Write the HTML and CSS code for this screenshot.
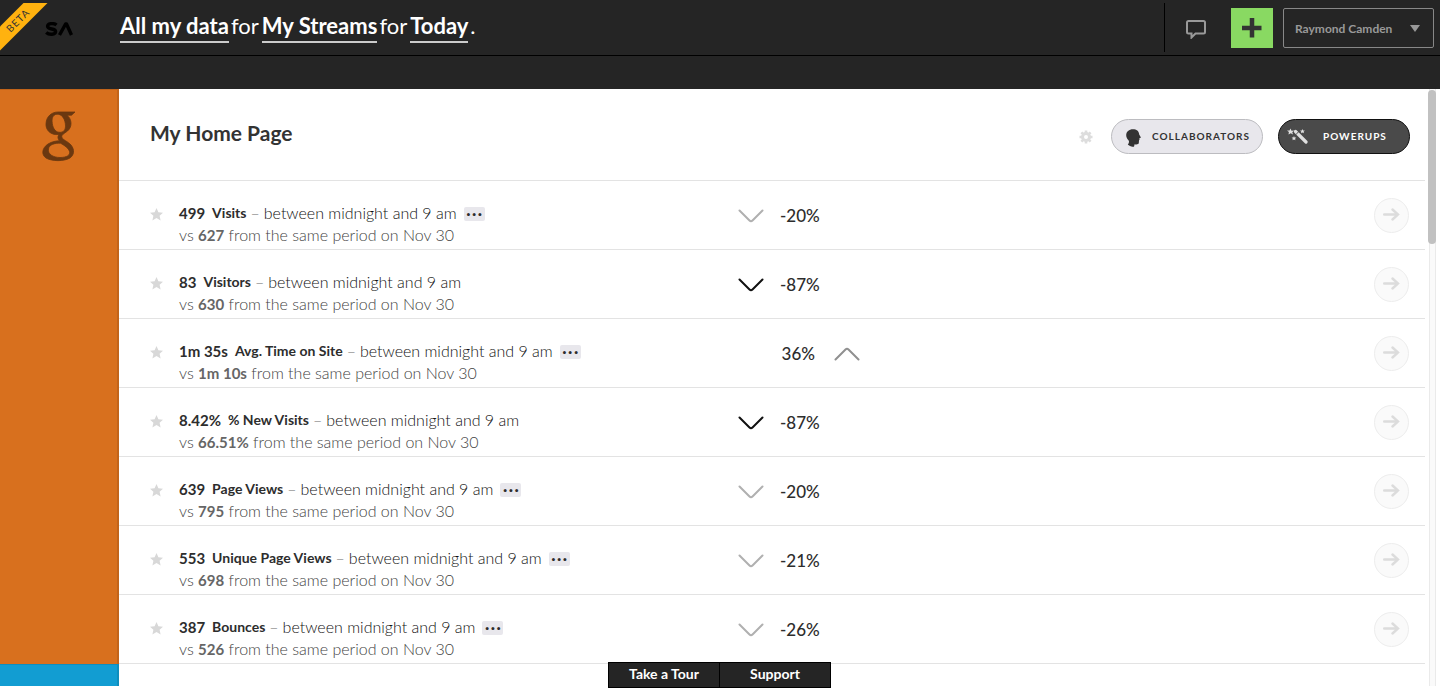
FILE: index.html
```html
<!DOCTYPE html>
<html lang="en">
<head>
<meta charset="utf-8">
<title>My Home Page</title>
<link rel="stylesheet" href="styles.css">
</head>
<body>
<svg class="defs" aria-hidden="true">
  <symbol id="star" viewBox="0 0 13 13"><path d="M6.500 0l1.900 4.200 4.600.5-3.400 3.100 1 4.700-4.100-2.400-4.100 2.400 1-4.700L0 4.700l4.600-.5z"/></symbol>
  <symbol id="down" viewBox="0 0 26 14"><path d="M1.500 1.500L11.500 11.500Q13 13 14.500 11.500L24.500 1.500"/></symbol>
  <symbol id="up" viewBox="0 0 26 14"><path d="M1.500 12.500L11.500 2.500Q13 1 14.500 2.500L24.500 12.500"/></symbol>
  <symbol id="go" viewBox="0 0 17 13"><path d="M1.200 6.500H15M9.500 1.500l5.500 5-5.500 5"/></symbol>
</svg>
<div class="app">
  <header class="topbar">
    <a class="brand" href="#" aria-label="SA home">
      <svg width="28" height="15" viewBox="0 0 28 15"><path d="M11.500 3C9 .9 2.600 1 2.600 4.300c0 4 8 1.500 8 5.300 0 3.300-6.600 3.400-9.400.9" fill="none" stroke="#000" stroke-width="3.400"/><path d="M14.500 13L20.600 2h.9l5 11" fill="none" stroke="#000" stroke-width="3.400" stroke-linejoin="round"/></svg>
    </a>
    <div class="corner"><span class="ribbon">BETA</span></div>
    <p class="sentence"><a href="#">All my data</a><span>for</span><a href="#">My Streams</a><span>for</span><a href="#">Today</a><span>.</span></p>
    <div class="tools">
      <button class="chat" aria-label="Messages"><svg width="20" height="19" viewBox="0 0 20 19"><path d="M2.500 1h15Q19 1 19 2.500v9.500Q19 13.500 17.500 13.500H9.500L5.500 17.500V13.500H2.500Q1 13.500 1 12V2.500Q1 1 2.500 1z" fill="none" stroke="#999" stroke-width="2"/></svg></button>
      <button class="add" aria-label="Add"><svg width="20" height="20" viewBox="0 0 20 20"><path d="M10 0v19.500M0 10h19.500" stroke="#333" stroke-width="4.500"/></svg></button>
      <button class="user">Raymond Camden<svg width="10" height="7" viewBox="0 0 10 7"><path d="M0 0h10L5 7z" fill="#999"/></svg></button>
    </div>
  </header>
  <div class="strip"></div>
  <div class="body">
    <nav class="streams" aria-label="Streams">
      <a class="stream google" href="#" aria-label="Google Analytics">
        <svg width="34" height="52" viewBox="0 0 34 52"><path fill="#6b3810" stroke="#6b3810" stroke-width=".8" fill-rule="evenodd" d="M16 1H33L29.500 4.200H25C30 8 30.500 16 25.500 20C21 23.500 19 24 20 26.500C21 29 26 30.500 29 34C33 39 32 44 28 47C22 50.500 10 50.500 4 47C-1 43.500 0 37 6 33C10 30.500 14 30 17.500 29.700C15.500 27.500 15.500 25.500 17 23.500C8 24.500 3.500 18.500 4 12.500C4.500 5 10 1 16 1zM15 3.200C10.500 3.500 9.500 8 10.300 12.500C11 18 14 21.700 18.500 21.300C23 21 24 17 23.300 12.500C22.500 7 19.500 3 15 3.200zM18.500 32.200C13 32 7 33.500 6.500 38C5.500 43 11 46.500 18 46.500C25 46.500 28.500 44 27.500 40.500C26.500 37 22.500 34.500 18.500 32.200z"/></svg>
      </a>
      <a class="stream next" href="#" aria-label="Next stream"></a>
    </nav>
    <main class="panel">
      <div class="heading">
        <h1>My Home Page</h1>
        <button class="gear" aria-label="Settings"><svg width="14" height="14" viewBox="0 0 14 14"><circle cx="7" cy="7" r="3.500" fill="none" stroke="#ddd" stroke-width="3"/><path d="M7 .5v2.500M7 11v2.500M.5 7H3M11 7h2.500M2.400 2.400l1.800 1.800M9.800 9.800l1.800 1.800M2.400 11.600l1.800-1.800M9.800 4.200l1.800-1.800" stroke="#ddd" stroke-width="2.600"/></svg></button>
        <button class="pill light"><svg width="15" height="18" viewBox="0 0 15 18"><path fill="#333" d="M7 .2C3 .2.200 2.600.2 6.200c0 2.300 1 3.500 2.300 5C3.500 12.500 3 14 1.800 15.500c1.500 1.400 4 2.300 6.200 2.300l.6-2.600c2 .4 4 .2 4.200-1.200l.2-2.500.6-1.200-.2-1.300c1 0 1.600-.2 1.400-.8L13.200 5.500C13 2 10.500.2 7 .2z"/></svg>COLLABORATORS</button>
        <button class="pill dark"><svg width="21" height="16" viewBox="0 0 21 16"><path d="M8.500 3.500L19 14" stroke="#e0e0e0" stroke-width="3.200" stroke-linecap="round"/><path d="M9.200 6.200l2.800-2.800" stroke="#4a4a4a"/><path fill="#e0e0e0" d="M3.500.5l1 2.200 2.500-.3-1.700 1.800L6 6.500 3.700 5.300 1.500 6.600l.4-2.500L0 2.600l2.500-.1zM15.500 1l.6 1.400 1.700.1-1.200 1.200.3 1.600-1.400-.8-1.500.8.300-1.600-1.200-1.200 1.700-.1zM7 8l.6 1.400 1.700.1-1.200 1.200.3 1.600L7 11.500l-1.500.8.3-1.600-1.200-1.200 1.700-.1z"/></svg>POWERUPS</button>
      </div>
      <ul class="rows">
        <li class="row"><button class="star" aria-label="Favourite"><svg width="13" height="13"><use href="#star"/></svg></button><div class="copy"><p class="now"><strong>499</strong><b>Visits</b><i>–</i><span>between midnight and 9 am</span><button class="more" aria-label="More">•••</button></p><p class="then">vs <strong>627</strong> from the same period on Nov 30</p></div><div class="delta soft"><svg><use href="#down"/></svg><span>-20%</span></div><a class="go" href="#" aria-label="Open Visits"><svg width="17" height="13"><use href="#go"/></svg></a></li>
        <li class="row"><button class="star" aria-label="Favourite"><svg width="13" height="13"><use href="#star"/></svg></button><div class="copy"><p class="now"><strong>83</strong><b>Visitors</b><i>–</i><span>between midnight and 9 am</span></p><p class="then">vs <strong>630</strong> from the same period on Nov 30</p></div><div class="delta hard"><svg><use href="#down"/></svg><span>-87%</span></div><a class="go" href="#" aria-label="Open Visitors"><svg width="17" height="13"><use href="#go"/></svg></a></li>
        <li class="row"><button class="star" aria-label="Favourite"><svg width="13" height="13"><use href="#star"/></svg></button><div class="copy"><p class="now"><strong>1m 35s</strong><b>Avg. Time on Site</b><i>–</i><span>between midnight and 9 am</span><button class="more" aria-label="More">•••</button></p><p class="then">vs <strong>1m 10s</strong> from the same period on Nov 30</p></div><div class="delta rise"><span>36%</span><svg><use href="#up"/></svg></div><a class="go" href="#" aria-label="Open Avg. Time on Site"><svg width="17" height="13"><use href="#go"/></svg></a></li>
        <li class="row"><button class="star" aria-label="Favourite"><svg width="13" height="13"><use href="#star"/></svg></button><div class="copy"><p class="now"><strong>8.42%</strong><b>% New Visits</b><i>–</i><span>between midnight and 9 am</span></p><p class="then">vs <strong>66.51%</strong> from the same period on Nov 30</p></div><div class="delta hard"><svg><use href="#down"/></svg><span>-87%</span></div><a class="go" href="#" aria-label="Open New Visits"><svg width="17" height="13"><use href="#go"/></svg></a></li>
        <li class="row"><button class="star" aria-label="Favourite"><svg width="13" height="13"><use href="#star"/></svg></button><div class="copy"><p class="now"><strong>639</strong><b>Page Views</b><i>–</i><span>between midnight and 9 am</span><button class="more" aria-label="More">•••</button></p><p class="then">vs <strong>795</strong> from the same period on Nov 30</p></div><div class="delta soft"><svg><use href="#down"/></svg><span>-20%</span></div><a class="go" href="#" aria-label="Open Page Views"><svg width="17" height="13"><use href="#go"/></svg></a></li>
        <li class="row"><button class="star" aria-label="Favourite"><svg width="13" height="13"><use href="#star"/></svg></button><div class="copy"><p class="now"><strong>553</strong><b>Unique Page Views</b><i>–</i><span>between midnight and 9 am</span><button class="more" aria-label="More">•••</button></p><p class="then">vs <strong>698</strong> from the same period on Nov 30</p></div><div class="delta soft"><svg><use href="#down"/></svg><span>-21%</span></div><a class="go" href="#" aria-label="Open Unique Page Views"><svg width="17" height="13"><use href="#go"/></svg></a></li>
        <li class="row"><button class="star" aria-label="Favourite"><svg width="13" height="13"><use href="#star"/></svg></button><div class="copy"><p class="now"><strong>387</strong><b>Bounces</b><i>–</i><span>between midnight and 9 am</span><button class="more" aria-label="More">•••</button></p><p class="then">vs <strong>526</strong> from the same period on Nov 30</p></div><div class="delta soft"><svg><use href="#down"/></svg><span>-26%</span></div><a class="go" href="#" aria-label="Open Bounces"><svg width="17" height="13"><use href="#go"/></svg></a></li>
      </ul>
    </main>
    <div class="track"><div class="thumb"></div></div>
  </div>
  <div class="help"><button>Take a Tour</button><button>Support</button></div>
</div>
</body>
</html>
```
FILE: styles.css
```css
* { box-sizing: border-box; }
body { margin: 0; background: #fff; color: #2d2d2d; font-family: Lato, "Open Sans", sans-serif; font-size: 16px; }
button { font: inherit; color: inherit; border: 0; padding: 0; background: none; cursor: pointer; }
a { color: inherit; text-decoration: none; }
h1, p, ul { margin: 0; padding: 0; }
strong, b { font-weight: 700; }
svg { display: block; flex: none; }
.defs { position: absolute; width: 0; height: 0; }
.app { position: relative; display: flex; flex-direction: column; height: 100vh; padding-bottom: 7px; overflow: hidden; }

.topbar { position: relative; display: flex; flex: none; align-items: center; height: 56px; background: #252525; border-bottom: 1px solid #000; color: #fff; }
.brand { width: 120px; padding: 4px 0 0 45px; }
.corner { position: absolute; top: 3px; left: 0; width: 48px; height: 48px; overflow: hidden; }
.ribbon { position: absolute; top: 9px; left: -17px; width: 70px; height: 17px; background: #ffb20f; color: #333; font-size: 10px; line-height: 17px; letter-spacing: 1px; text-align: center; transform: rotate(-45deg); }
.sentence { display: flex; align-items: center; font-size: 22px; line-height: 31px; white-space: nowrap; padding-bottom: 8px; margin-top: 4px; }
.sentence a { border-bottom: 2px solid #ccc; font-weight: 700; padding-top: 1px; }
.sentence span { margin: 0 3px 0 2px; font-weight: 400; }
.tools { display: flex; align-items: center; align-self: stretch; margin: 3px 6px 3px auto; padding-top: 1px; border-left: 1px solid #000; }
.chat { margin: 2px 25px 0 21px; }
.add { display: grid; place-items: center; width: 42px; height: 40px; margin-right: 10px; background: #89d962; }
.user { display: flex; align-items: center; justify-content: space-between; width: 151px; height: 40px; padding: 0 13px 0 11px; border: 1px solid #888; border-radius: 2px; color: #999; font-size: 12px; font-weight: 700; }
.strip { flex: none; height: 33px; background: #252525; }

.body { display: flex; flex: 1; min-height: 0; }
.streams { display: flex; flex: none; flex-direction: column; width: 119px; }
.stream { display: block; box-shadow: inset -2px 1px 0 rgb(0 0 0 / 10%); }
.google { flex: 1; padding: 22px 0 0 42px; background: #d8701e; }
.next { height: 22px; background: #129dd2; }
.panel { flex: 1; min-width: 0; overflow: hidden; }
.heading { display: flex; align-items: center; height: 92px; padding: 3px 15px 0 31px; border-bottom: 1px solid #e3e3e3; }
.heading h1 { flex: 1; padding-bottom: 6px; font-size: 21px; line-height: 26px; font-weight: 700; color: #333; }
.gear { margin: 2px 18px 0 0; }
.pill { display: flex; align-items: center; height: 35px; border: 1px solid; border-radius: 18px; font-size: 10px; font-weight: 700; letter-spacing: 1px; }
.light { width: 152px; gap: 11px; padding-left: 14px; margin-right: 15px; background: #e8e7ec; border-color: #bcbcc0; color: #333; }
.light svg { margin-top: 3px; }
.dark { width: 132px; gap: 15px; padding-left: 8px; background: #4a4a4a; border-color: #111; color: #fff; }

.rows { list-style: none; }
.row { display: grid; grid-template-columns: 29px 559fr 122px 514fr 35px; align-items: start; height: 69px; padding: 0 16px 0 31px; border-bottom: 1px solid #e3e3e3; }
.star { width: 13px; margin-top: 27px; fill: #d8d8d8; }
.copy { padding-top: 21px; line-height: 22px; font-weight: 300; white-space: nowrap; }
.copy strong { font-size: 15px; }
.now { display: flex; align-items: center; }
.now b { margin-left: 7px; font-size: 14px; }
.now i { margin: 0 4px; font-style: normal; color: #777; }
.now span { color: #111; }
.more { width: 21px; height: 14px; margin: 2px 0 0 7px; border-radius: 2px; background: #e8e7ec; font-size: 10px; line-height: 14px; }
.then { color: #444; }
.then strong { color: #666; }
.delta { display: flex; align-items: center; gap: 16px; margin-top: 24px; font-size: 17px; line-height: 22px; font-weight: 500; }
.delta svg { width: 26px; height: 14px; fill: none; stroke: currentColor; stroke-width: 2; stroke-linecap: round; }
.soft svg { color: #b0b0b0; }
.hard svg { color: #111; }
.rise { justify-content: flex-end; gap: 19px; }
.rise svg { color: #909090; }
.go { grid-column: 5; display: grid; place-items: center; width: 35px; height: 35px; margin-top: 17px; padding-bottom: 2px; border: 1px solid #ededed; border-radius: 50%; background: #fafafa; }
.go svg { fill: none; stroke: #dcdcdc; stroke-width: 2.400; stroke-linecap: round; }
.track { flex: none; width: 7px; margin: 0 4px 0 4px; border: solid #eaeaea; border-width: 0 1px; background: #fafafa; }
.thumb { width: 8px; height: 154px; margin: 1px 0 0 -2px; border-radius: 4px; background: #c1c1c1; }

.help { position: absolute; left: 50%; bottom: 5px; display: flex; width: 223px; margin-left: -112px; border: 1px solid #000; background: #252525; color: #fff; }
.help button { flex: 1; height: 24px; padding-bottom: 3px; font-size: 14px; font-weight: 700; }
.help button + button { border-left: 1px solid #000; }
```
